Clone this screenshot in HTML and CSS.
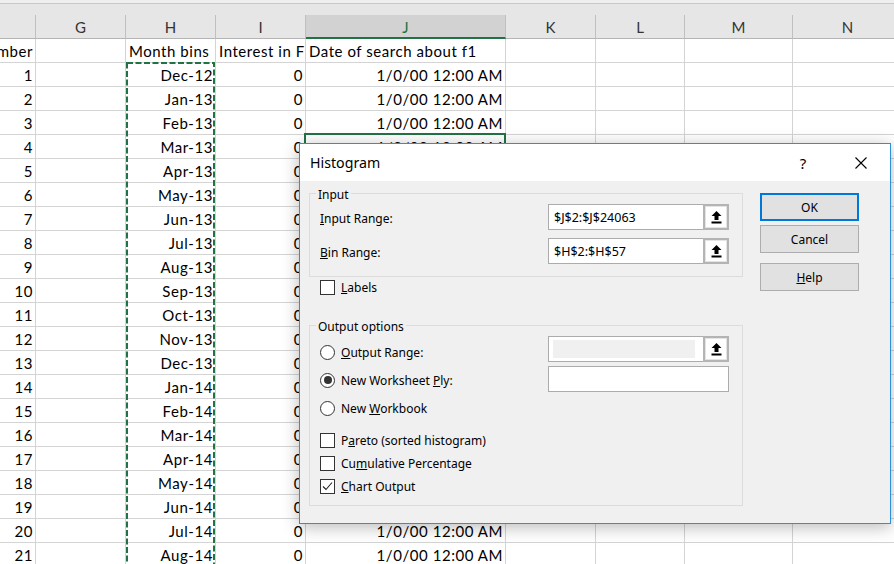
FILE: index.html
```html
<!DOCTYPE html>
<html>
<head>
<meta charset="utf-8">
<title>Histogram</title>
<link rel="stylesheet" href="styles.css">
</head>
<body>
<div class="app">
  <div class="topbar"></div>
  <div class="sheet">
    <div class="c h"></div><div class="c h">G</div><div class="c h">H</div><div class="c h">I</div><div class="c h sel">J</div><div class="c h">K</div><div class="c h">L</div><div class="c h">M</div><div class="c h">N</div>

    <div class="c r"><span>Number</span></div><div class="c"></div><div class="c">Month bins</div><div class="c">Interest in F1</div><div class="c">Date of search about f1</div><div class="c"></div><div class="c"></div><div class="c"></div><div class="c"></div>

    <div class="c r">1</div><div class="c"></div><div class="c r">Dec-12</div><div class="c r">0</div><div class="c r">1/0/00 12:00 AM</div><div class="c"></div><div class="c"></div><div class="c"></div><div class="c"></div>
    <div class="c r">2</div><div class="c"></div><div class="c r">Jan-13</div><div class="c r">0</div><div class="c r">1/0/00 12:00 AM</div><div class="c"></div><div class="c"></div><div class="c"></div><div class="c"></div>
    <div class="c r">3</div><div class="c"></div><div class="c r">Feb-13</div><div class="c r">0</div><div class="c r">1/0/00 12:00 AM</div><div class="c"></div><div class="c"></div><div class="c"></div><div class="c"></div>
    <div class="c r">4</div><div class="c"></div><div class="c r">Mar-13</div><div class="c r">0</div><div class="c r">1/0/00 12:00 AM</div><div class="c"></div><div class="c"></div><div class="c"></div><div class="c"></div>
    <div class="c r">5</div><div class="c"></div><div class="c r">Apr-13</div><div class="c r">0</div><div class="c r">1/0/00 12:00 AM</div><div class="c"></div><div class="c"></div><div class="c"></div><div class="c"></div>
    <div class="c r">6</div><div class="c"></div><div class="c r">May-13</div><div class="c r">0</div><div class="c r">1/0/00 12:00 AM</div><div class="c"></div><div class="c"></div><div class="c"></div><div class="c"></div>
    <div class="c r">7</div><div class="c"></div><div class="c r">Jun-13</div><div class="c r">0</div><div class="c r">1/0/00 12:00 AM</div><div class="c"></div><div class="c"></div><div class="c"></div><div class="c"></div>
    <div class="c r">8</div><div class="c"></div><div class="c r">Jul-13</div><div class="c r">0</div><div class="c r">1/0/00 12:00 AM</div><div class="c"></div><div class="c"></div><div class="c"></div><div class="c"></div>
    <div class="c r">9</div><div class="c"></div><div class="c r">Aug-13</div><div class="c r">0</div><div class="c r">1/0/00 12:00 AM</div><div class="c"></div><div class="c"></div><div class="c"></div><div class="c"></div>
    <div class="c r">10</div><div class="c"></div><div class="c r">Sep-13</div><div class="c r">0</div><div class="c r">1/0/00 12:00 AM</div><div class="c"></div><div class="c"></div><div class="c"></div><div class="c"></div>
    <div class="c r">11</div><div class="c"></div><div class="c r">Oct-13</div><div class="c r">0</div><div class="c r">1/0/00 12:00 AM</div><div class="c"></div><div class="c"></div><div class="c"></div><div class="c"></div>
    <div class="c r">12</div><div class="c"></div><div class="c r">Nov-13</div><div class="c r">0</div><div class="c r">1/0/00 12:00 AM</div><div class="c"></div><div class="c"></div><div class="c"></div><div class="c"></div>
    <div class="c r">13</div><div class="c"></div><div class="c r">Dec-13</div><div class="c r">0</div><div class="c r">1/0/00 12:00 AM</div><div class="c"></div><div class="c"></div><div class="c"></div><div class="c"></div>
    <div class="c r">14</div><div class="c"></div><div class="c r">Jan-14</div><div class="c r">0</div><div class="c r">1/0/00 12:00 AM</div><div class="c"></div><div class="c"></div><div class="c"></div><div class="c"></div>
    <div class="c r">15</div><div class="c"></div><div class="c r">Feb-14</div><div class="c r">0</div><div class="c r">1/0/00 12:00 AM</div><div class="c"></div><div class="c"></div><div class="c"></div><div class="c"></div>
    <div class="c r">16</div><div class="c"></div><div class="c r">Mar-14</div><div class="c r">0</div><div class="c r">1/0/00 12:00 AM</div><div class="c"></div><div class="c"></div><div class="c"></div><div class="c"></div>
    <div class="c r">17</div><div class="c"></div><div class="c r">Apr-14</div><div class="c r">0</div><div class="c r">1/0/00 12:00 AM</div><div class="c"></div><div class="c"></div><div class="c"></div><div class="c"></div>
    <div class="c r">18</div><div class="c"></div><div class="c r">May-14</div><div class="c r">0</div><div class="c r">1/0/00 12:00 AM</div><div class="c"></div><div class="c"></div><div class="c"></div><div class="c"></div>
    <div class="c r">19</div><div class="c"></div><div class="c r">Jun-14</div><div class="c r">0</div><div class="c r">1/0/00 12:00 AM</div><div class="c"></div><div class="c"></div><div class="c"></div><div class="c"></div>
    <div class="c r">20</div><div class="c"></div><div class="c r">Jul-14</div><div class="c r">0</div><div class="c r">1/0/00 12:00 AM</div><div class="c"></div><div class="c"></div><div class="c"></div><div class="c"></div>
    <div class="c r">21</div><div class="c"></div><div class="c r">Aug-14</div><div class="c r">0</div><div class="c r">1/0/00 12:00 AM</div><div class="c"></div><div class="c"></div><div class="c"></div><div class="c"></div>
  </div>

  <svg class="ants" width="90" height="510" viewBox="0 0 90 510">
    <rect x="1" y="1" width="87" height="600" fill="none" stroke="#217346" stroke-width="2" stroke-dasharray="6 2.5"/>
  </svg>
  <div class="active-cell"></div>

  <div class="dialog">
    <div class="titlebar">
      <span class="title">Histogram</span>
      <span class="tb-help">?</span>
      <span class="tb-close">
        <svg width="12" height="12" viewBox="0 0 12 12"><path d="M0.5 0.5 L11.5 11.5 M11.5 0.5 L0.5 11.5" stroke="#000" stroke-width="1.1" fill="none"/></svg>
      </span>
    </div>
    <div class="dlg-body">
      <div class="left">
        <div class="group g-input">
          <div class="glabel">Input</div>
          <div class="frow">
            <span class="lbl"><u>I</u>nput Range:</span>
            <div class="refedit"><span class="val">$J$2:$J$24063</span><span class="rbtn"><svg width="11" height="13" viewBox="0 0 11 13"><path d="M5.5 0 L10.5 5 L7.5 5 L7.5 9 L3.5 9 L3.5 5 L0.5 5 Z" fill="#000"/><rect x="0.5" y="10.5" width="10" height="2" fill="#000"/></svg></span></div>
          </div>
          <div class="frow frow2">
            <span class="lbl"><u>B</u>in Range:</span>
            <div class="refedit"><span class="val">$H$2:$H$57</span><span class="rbtn"><svg width="11" height="13" viewBox="0 0 11 13"><path d="M5.5 0 L10.5 5 L7.5 5 L7.5 9 L3.5 9 L3.5 5 L0.5 5 Z" fill="#000"/><rect x="0.5" y="10.5" width="10" height="2" fill="#000"/></svg></span></div>
          </div>
        </div>

        <div class="opt labels-row"><span class="cb"></span><span><u>L</u>abels</span></div>

        <div class="group g-output">
          <div class="glabel">Output options</div>
          <div class="orow orow1">
            <div class="opt"><span class="rb"></span><span><u>O</u>utput Range:</span></div>
            <div class="refedit disabled"><span class="val"><span class="dis-fill"></span></span><span class="rbtn"><svg width="11" height="13" viewBox="0 0 11 13"><path d="M5.5 0 L10.5 5 L7.5 5 L7.5 9 L3.5 9 L3.5 5 L0.5 5 Z" fill="#000"/><rect x="0.5" y="10.5" width="10" height="2" fill="#000"/></svg></span></div>
          </div>
          <div class="orow orow2">
            <div class="opt"><span class="rb on"></span><span>New Worksheet <u>P</u>ly:</span></div>
            <div class="textbox"></div>
          </div>
          <div class="orow orow3">
            <div class="opt"><span class="rb"></span><span>New <u>W</u>orkbook</span></div>
          </div>
          <div class="opt crow crow1"><span class="cb"></span><span>P<u>a</u>reto (sorted histogram)</span></div>
          <div class="opt crow"><span class="cb"></span><span>Cu<u>m</u>ulative Percentage</span></div>
          <div class="opt crow"><span class="cb checked"><svg width="13" height="13" viewBox="0 0 13 13"><path d="M2 6.5 L5 9.5 L11 2.5" stroke="#222" stroke-width="1.1" fill="none"/></svg></span><span><u>C</u>hart Output</span></div>
        </div>
      </div>

      <div class="buttons">
        <div class="btn default">OK</div>
        <div class="btn cancel">Cancel</div>
        <div class="btn help"><span><u>H</u>elp</span></div>
      </div>
    </div>
  </div>
</div>
</body>
</html>
```

FILE: styles.css
```css
* { box-sizing: border-box; }
html, body { margin: 0; padding: 0; }
body {
  width: 894px;
  height: 564px;
  overflow: hidden;
  background: #fff;
  font-family: Lato, "Liberation Sans", sans-serif;
}
.app {
  position: relative;
  width: 894px;
  height: 564px;
  overflow: hidden;
}
.topbar {
  height: 15px;
  background: linear-gradient(#efefef 0 3px, #c8c8c8 3px 4px, #e6e6e6 4px);
}

/* spreadsheet grid */
.sheet {
  display: grid;
  grid-template-columns: 36px 90px 90px 90px 200px 90px 89px 108px 110px;
  grid-auto-rows: 24px;
  font-size: 15px;
  letter-spacing: 0.55px;
  color: #000;
}
.c {
  border-right: 1px solid #d4d4d4;
  border-bottom: 1px solid #d4d4d4;
  padding: 0 3px;
  white-space: nowrap;
  overflow: hidden;
  display: flex;
  align-items: center;
}
.c > span { flex: none; }
.r { justify-content: flex-end; padding-right: 2px; }
.h {
  background: #e6e6e6;
  border-right-color: #c0c0c0;
  border-bottom-color: #b5b5b5;
  justify-content: center;
  color: #333;
  letter-spacing: 0;
}
.h.sel {
  background: #d2d2d2;
  border-bottom: 2px solid #217346;
  color: #217346;
  padding-top: 1px;
}

.ants {
  position: absolute;
  left: 126px;
  top: 62px;
}
.active-cell {
  position: absolute;
  left: 304px;
  top: 133px;
  width: 202px;
  height: 26px;
  border: 2px solid #217346;
}

/* dialog */
.dialog {
  position: absolute;
  left: 299px;
  top: 143px;
  width: 592px;
  height: 381px;
  border: 1px solid #2c8fd8;
  background: #f0f0f0;
  box-shadow: 0 3px 16px rgba(0, 0, 0, 0.28);
  font-family: "Noto Sans", "Open Sans", sans-serif;
  font-size: 12px;
  color: #000;
  display: flex;
  flex-direction: column;
}
.titlebar {
  height: 37px;
  background: #fff;
  display: flex;
  align-items: center;
  padding-left: 10px;
  flex: none;
}
.title {
  font-size: 14.2px;
  flex: 1;
}
.tb-help {
  width: 46px;
  text-align: center;
  font-size: 15px;
}
.tb-close {
  width: 46px;
  margin-left: 12px;
  margin-right: 6px;
  display: flex;
  justify-content: center;
}

.dlg-body {
  flex: 1;
  display: flex;
  gap: 17px;
  padding: 12px 0 0 9px;
}
.left {
  width: 434px;
  display: flex;
  flex-direction: column;
}
.group {
  border: 1px solid #dcdcdc;
  padding: 0 13px 0 10px;
  display: flex;
  flex-direction: column;
}
.glabel {
  align-self: flex-start;
  height: 14px;
  line-height: 14px;
  margin: -6px 0 0 -4px;
  padding: 0 2px;
  background: #f0f0f0;
}
.g-input { height: 84px; }
.frow {
  display: flex;
  align-items: center;
  justify-content: space-between;
  height: 26px;
  margin-top: 2px;
}
.frow2 { margin-top: 8px; }
.lbl { padding-top: 2px; }

.refedit, .textbox {
  width: 181px;
  height: 26px;
  border: 1px solid #acacac;
  background: #fff;
  display: flex;
  align-items: center;
}
.val {
  flex: 1;
  padding-left: 5px;
  font-size: 12.5px;
  display: flex;
  align-items: center;
  height: 100%;
}
.dis-fill {
  display: block;
  width: 142px;
  height: 18px;
  background: #f0f0f0;
}
.refedit.disabled .val { padding-left: 4px; }
.rbtn {
  width: 26px;
  height: 26px;
  margin: -1px -1px -1px 0;
  border: 2px solid #b4b4b4;
  background: #fff;
  box-shadow: inset 0 0 0 1px #e4e4e4;
  display: flex;
  align-items: center;
  justify-content: center;
}

.opt {
  display: flex;
  align-items: center;
  gap: 6px;
  height: 16px;
}
.labels-row {
  margin-top: 2px;
  margin-left: 11px;
}
.cb {
  width: 15px;
  height: 15px;
  border: 1px solid #333;
  background: #fff;
  display: flex;
  align-items: center;
  justify-content: center;
  flex: none;
}
.rb {
  width: 15px;
  height: 15px;
  border: 1px solid #333;
  border-radius: 50%;
  background: #fff;
  display: flex;
  align-items: center;
  justify-content: center;
  flex: none;
}
.rb.on::after {
  content: "";
  width: 8px;
  height: 8px;
  border-radius: 50%;
  background: #333;
}

.g-output {
  height: 181px;
  margin-top: 30px;
}
.orow {
  display: flex;
  align-items: flex-start;
  justify-content: space-between;
  height: 28px;
}
.orow1 { margin-top: 2px; }
.orow1 .opt { margin-top: 8px; }
.orow2 { margin-top: 2px; }
.orow2 .opt, .orow3 .opt { margin-top: 6px; }
.crow { margin-top: 7px; }
.crow1 { margin-top: 10px; }

.buttons {
  width: 99px;
  display: flex;
  flex-direction: column;
}
.btn {
  height: 28px;
  background: #e1e1e1;
  border: 1px solid #adadad;
  display: flex;
  align-items: center;
  justify-content: center;
}
.btn.default { border: 2px solid #0078d7; }
.btn.cancel { margin-top: 4px; }
.btn.help { margin-top: 10px; }
```
